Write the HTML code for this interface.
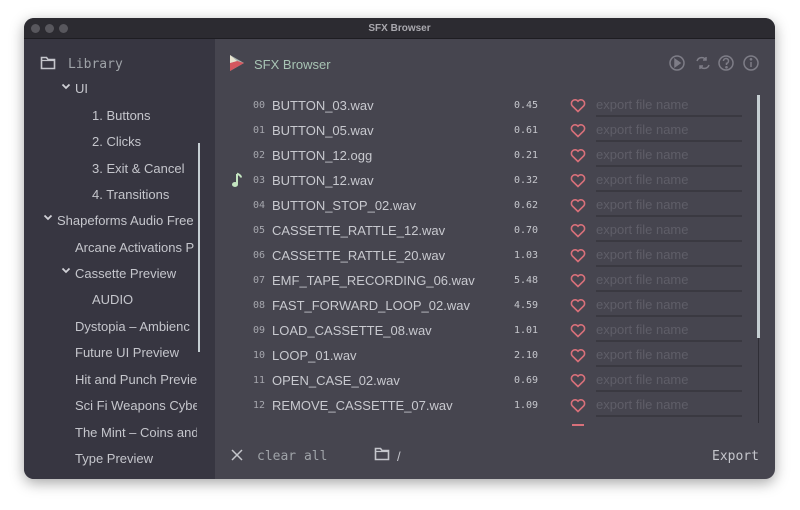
<!DOCTYPE html>
<html><head><meta charset="utf-8"><style>
*{margin:0;padding:0;box-sizing:border-box}
body{width:800px;height:510px;background:#fff;position:relative;overflow:hidden;font-family:"Liberation Sans","DejaVu Sans",sans-serif}
.win{position:absolute;left:24px;top:18px;width:751px;height:461px;border-radius:10px;overflow:hidden;box-shadow:0 4px 14px rgba(0,0,0,.35);background:#46454f}
.tb{position:absolute;left:0;top:0;width:751px;height:21px;background:#2c2b31;border-bottom:1px solid #1e1d22;color:#a9a8ae;font-size:10px;text-align:center;line-height:21px;font-weight:bold}
.dot{position:absolute;top:6px;width:9px;height:9px;border-radius:50%;background:#58575d}
.side{position:absolute;left:0;top:21px;width:191px;height:440px;background:#373641}
.t{position:absolute;color:#c5c6cc;font-size:13px;white-space:nowrap;line-height:16px}
.m{font-family:"DejaVu Sans Mono","Liberation Mono",monospace;font-size:13px}
.abs{position:absolute}
.num{position:absolute;left:253px;color:#a5a6ad;font-size:10px;font-family:"DejaVu Sans Mono",monospace}
.nm{position:absolute;left:272px;color:#c8c9cf;font-size:13px}
.du{position:absolute;left:514px;color:#c5c6cc;font-size:10px;font-family:"DejaVu Sans Mono",monospace}
.in{position:absolute;left:596px;width:146px;height:20px;border-bottom:2px solid #3a3941;color:#5f5e68;font-size:13px;line-height:15px}
</style></head><body>
<div class="win">
<div class="tb">SFX Browser<div class="dot" style="left:7px"></div><div class="dot" style="left:21px"></div><div class="dot" style="left:35px"></div></div>
<div class="side"></div>
</div>
<svg class="abs" style="left:40px;top:56px" width="16" height="14" viewBox="0 0 16 14"><path d="M1.5 1.5h5l1.5 2h6.5v9h-13z" fill="none" stroke="#c5c6cc" stroke-width="1.6"/><path d="M1.5 4.5h13" stroke="#c5c6cc" stroke-width="1.2"/></svg>
<div class="t m" style="left:68px;top:57px;color:#9fa3a8">Library</div>
<svg class="abs" style="left:61px;top:83px" width="10" height="8"><path d="M1.5 1.5l3.5 3.5 3.5-3.5" fill="none" stroke="#d0d1d6" stroke-width="1.8"/></svg>
<div class="t" style="left:75px;top:81px">UI</div>
<div class="t" style="left:92px;top:108px">1. Buttons</div>
<div class="t" style="left:92px;top:134px">2. Clicks</div>
<div class="t" style="left:92px;top:161px">3. Exit &amp; Cancel</div>
<div class="t" style="left:92px;top:187px">4. Transitions</div>
<svg class="abs" style="left:43px;top:214px" width="10" height="8"><path d="M1.5 1.5l3.5 3.5 3.5-3.5" fill="none" stroke="#d0d1d6" stroke-width="1.8"/></svg>
<div class="t" style="left:57px;top:213px;width:140px;overflow:hidden">Shapeforms Audio Free</div>
<div class="t" style="left:75px;top:240px;width:122px;overflow:hidden">Arcane Activations P</div>
<svg class="abs" style="left:61px;top:267px" width="10" height="8"><path d="M1.5 1.5l3.5 3.5 3.5-3.5" fill="none" stroke="#d0d1d6" stroke-width="1.8"/></svg>
<div class="t" style="left:75px;top:266px">Cassette Preview</div>
<div class="t" style="left:92px;top:292px">AUDIO</div>
<div class="t" style="left:75px;top:319px;width:122px;overflow:hidden">Dystopia – Ambienc</div>
<div class="t" style="left:75px;top:345px">Future UI Preview</div>
<div class="t" style="left:75px;top:372px;width:122px;overflow:hidden">Hit and Punch Previe</div>
<div class="t" style="left:75px;top:398px;width:122px;overflow:hidden">Sci Fi Weapons Cybe</div>
<div class="t" style="left:75px;top:425px;width:122px;overflow:hidden">The Mint – Coins and</div>
<div class="t" style="left:75px;top:451px">Type Preview</div>
<div class="abs" style="left:198px;top:143px;width:2px;height:209px;background:#c6cfd3"></div>
<svg class="abs" style="left:229px;top:54px" width="16" height="18" viewBox="0 0 16 18"><path d="M1 1l14 8-14 8z" fill="#a9b3b0"/><path d="M1 9l7-2 7 2-14 8z" fill="#d4575e"/><path d="M1 1l7 6-7 2z" fill="#e8e4d0"/></svg>
<div class="t" style="left:254px;top:57px;color:#a8c4b4">SFX Browser</div>
<svg class="abs" style="left:667px;top:54px" width="96" height="18" viewBox="0 0 96 18" fill="none" stroke="#7e7d87" stroke-width="1.5">
<circle cx="10" cy="9" r="7"/><path d="M8 5.5v7l5-3.5z" fill="#7e7d87"/>
<path d="M30 7a5 5 0 0 1 9-1M42 11a5 5 0 0 1-9 1"/><path d="M39 3v3h-3M33 15v-3h3"/>
<circle cx="59" cy="9" r="7"/><path d="M56.5 7a2.5 2.5 0 1 1 3 2.4v1.6"/><circle cx="59.5" cy="13.3" r=".6" fill="#7e7d87"/>
<circle cx="84" cy="9" r="7"/><path d="M84 8v5"/><circle cx="84" cy="5.3" r=".6" fill="#7e7d87"/>
</svg>
<div id="rows"></div>
<svg class="abs" style="left:231px;top:172px" width="12" height="16" viewBox="0 0 12 16"><path d="M6 2v10" stroke="#c4e4c0" stroke-width="2"/><path d="M6 1.5c2 1 4 2 4 4" stroke="#c4e4c0" stroke-width="2" fill="none"/><ellipse cx="4" cy="12.5" rx="3" ry="2.5" fill="#c4e4c0"/></svg>
<div class="abs" style="left:757px;top:95px;width:3px;height:243px;background:#c6cfd3"></div>
<div class="abs" style="left:758px;top:338px;width:1px;height:85px;background:#2f2e36"></div>
<svg class="abs" style="left:231px;top:449px" width="12" height="12"><path d="M1 1l10 10M11 1L1 11" stroke="#c5c6cc" stroke-width="1.5"/></svg>
<div class="t m" style="left:257px;top:449px;color:#9fa3a8">clear all</div>
<svg class="abs" style="left:374px;top:447px" width="16" height="14" viewBox="0 0 16 14"><path d="M1.5 1.5h5l1.5 2h6.5v9h-13z" fill="none" stroke="#c5c6cc" stroke-width="1.6"/><path d="M1.5 4.5h13" stroke="#c5c6cc" stroke-width="1.2"/></svg>
<div class="t" style="left:397px;top:449px">/</div>
<div class="t m" style="left:712px;top:449px;color:#c5c6cc">Export</div>
<script>
var f=["BUTTON_03.wav","BUTTON_05.wav","BUTTON_12.ogg","BUTTON_12.wav","BUTTON_STOP_02.wav","CASSETTE_RATTLE_12.wav","CASSETTE_RATTLE_20.wav","EMF_TAPE_RECORDING_06.wav","FAST_FORWARD_LOOP_02.wav","LOAD_CASSETTE_08.wav","LOOP_01.wav","OPEN_CASE_02.wav","REMOVE_CASSETTE_07.wav"];
var d=["0.45","0.61","0.21","0.32","0.62","0.70","1.03","5.48","4.59","1.01","2.10","0.69","1.09"];
var h="";
for(var i=0;i<13;i++){var y=105+25*i;
h+='<div class="num" style="top:'+(y-5)+'px">'+(i<10?'0'+i:i)+'</div><div class="nm" style="top:'+(y-7)+'px">'+f[i]+'</div><div class="du" style="top:'+(y-5)+'px">'+d[i]+'</div>';
h+='<svg class="abs" style="left:570px;top:'+(y-7)+'px" width="16" height="15" viewBox="0 0 16 15"><path d="M8 13.5L2.2 7.8A3.4 3.4 0 0 1 8 3.2a3.4 3.4 0 0 1 5.8 4.6z" fill="none" stroke="#d8707a" stroke-width="1.6"/></svg>';
h+='<div class="in" style="top:'+(y-8)+'px">export file name</div>';}
h+='<div class="abs" style="left:572px;top:424px;width:12px;height:2px;background:#d8707a"></div>';
document.getElementById("rows").innerHTML=h;
</script>
</body></html>
